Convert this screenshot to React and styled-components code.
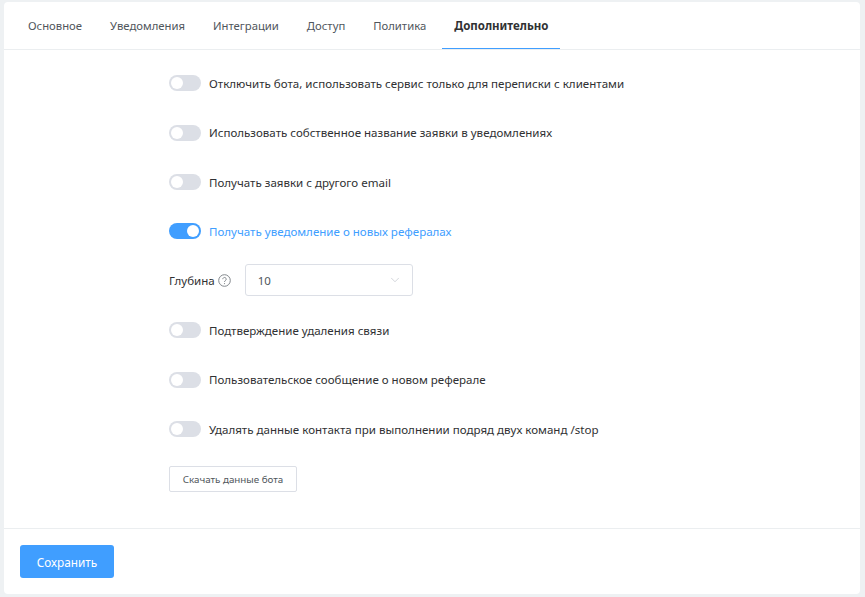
import React from 'react';
import styled, { createGlobalStyle } from 'styled-components';
import { ChevronDown } from 'lucide-react';

const Global = createGlobalStyle`
  html, body { margin: 0; padding: 0; background: #eef1f3; }
  body { font-family: "Noto Sans", "Open Sans", sans-serif; }
  * { box-sizing: border-box; }
`;

const Page = styled.div`
  width: 865px;
  height: 597px;
  padding: 2px 5px 3px 4px;
`;

const Card = styled.div`
  height: 100%;
  background: #fff;
  border-radius: 4px;
  display: flex;
  flex-direction: column;
`;

const Tabs = styled.nav`
  height: 48px;
  padding-left: 12px;
  display: flex;
  border-bottom: 1px solid #ebeef0;
  flex: none;
`;

const Tab = styled.div`
  padding: 0 12px;
  margin-right: ${p => (p.$active ? 0 : 4)}px;
  height: 47px;
  line-height: 48px;
  font-size: ${p => (p.$active ? 11.5 : 11.3)}px;
  font-weight: ${p => (p.$active ? 700 : 400)};
  color: ${p => (p.$active ? '#303133' : '#50565c')};
  border-bottom: ${p => (p.$active ? '1px solid #409eff' : 'none')};
`;

const Body = styled.div`
  flex: 1;
  padding: 8.6px 0 0 165px;
  display: flex;
  flex-direction: column;
  align-items: flex-start;
`;

const Row = styled.div`
  height: 49.4px;
  flex: none;
  display: flex;
  align-items: center;
  gap: 8px;
  font-size: 11.55px;
  color: ${p => (p.$on ? '#409eff' : '#303133')};
`;

const FieldRow = styled(Row)`
  margin: -0.6px 0 0.6px;
`;

const Track = styled.span`
  width: 32px;
  height: 16px;
  border-radius: 8px;
  background: ${p => (p.$on ? '#409eff' : '#dcdfe6')};
  display: flex;
  align-items: center;
  justify-content: ${p => (p.$on ? 'flex-end' : 'flex-start')};
  padding: 0 2px;
`;

const Knob = styled.span`
  width: 12px;
  height: 12px;
  border-radius: 50%;
  background: #fff;
`;

const FieldLabel = styled.span`
  display: flex;
  align-items: center;
  gap: 3px;
  margin-right: 6px;
  color: #303133;
`;

const Select = styled.div`
  width: 168px;
  height: 32px;
  border: 1px solid #dcdfe6;
  border-radius: 3px;
  padding: 0 10px 0 12px;
  display: flex;
  align-items: center;
  justify-content: space-between;
  color: #50565c;
  font-size: 11.5px;
`;

const Ghost = styled.button`
  margin-top: 12.4px;
  width: 128px;
  height: 26px;
  background: #fff;
  border: 1px solid #dcdfe6;
  border-radius: 2px;
  font: inherit;
  font-size: 9.8px;
  color: #50565c;
  padding: 0;
`;

const Footer = styled.div`
  flex: none;
  height: 66px;
  border-top: 1px solid #ebeef0;
  padding: 16px;
`;

const Primary = styled.button`
  width: 94px;
  height: 33px;
  background: #409eff;
  border: none;
  border-radius: 3px;
  color: #fff;
  font: inherit;
  font-size: 11.8px;
  padding: 0;
`;

const Help = () => (
  <svg width="13" height="13" viewBox="0 0 13 13" fill="none" stroke="#82878c">
    <circle cx="6.5" cy="6.5" r="5.8" />
    <path d="M4.8 5.2a1.7 1.7 0 1 1 2.6 1.4c-.6.4-.9.7-.9 1.4" />
    <circle cx="6.5" cy="9.6" r=".6" fill="#82878c" stroke="none" />
  </svg>
);

const Toggle = ({ on, children }) => (
  <Row $on={on}>
    <Track $on={on}><Knob /></Track>
    {children}
  </Row>
);

export default function App() {
  return (
    <Page>
      <Global />
      <Card>
        <Tabs>
          <Tab>Основное</Tab>
          <Tab>Уведомления</Tab>
          <Tab>Интеграции</Tab>
          <Tab>Доступ</Tab>
          <Tab>Политика</Tab>
          <Tab $active>Дополнительно</Tab>
        </Tabs>
        <Body>
          <Toggle>Отключить бота, использовать сервис только для переписки с клиентами</Toggle>
          <Toggle>Использовать собственное название заявки в уведомлениях</Toggle>
          <Toggle>Получать заявки с другого email</Toggle>
          <Toggle on>Получать уведомление о новых рефералах</Toggle>
          <FieldRow>
            <FieldLabel>Глубина <Help /></FieldLabel>
            <Select>10<ChevronDown size={14} color="#c0c4cc" strokeWidth={1.2} /></Select>
          </FieldRow>
          <Toggle>Подтверждение удаления связи</Toggle>
          <Toggle>Пользовательское сообщение о новом реферале</Toggle>
          <Toggle>Удалять данные контакта при выполнении подряд двух команд /stop</Toggle>
          <Ghost>Скачать данные бота</Ghost>
        </Body>
        <Footer><Primary>Сохранить</Primary></Footer>
      </Card>
    </Page>
  );
}
